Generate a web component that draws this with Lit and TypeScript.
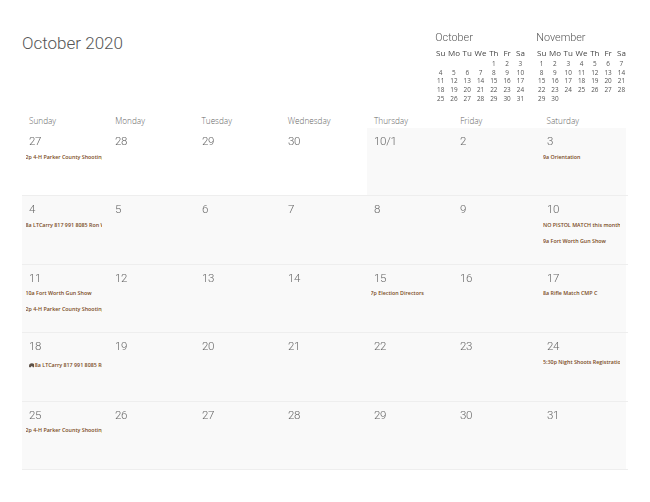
import { LitElement, html, css } from "lit";
import { customElement } from "lit/decorators.js";

type Ev = { t: string; icon?: boolean };
const DOW = ["Sunday", "Monday", "Tuesday", "Wednesday", "Thursday", "Friday", "Saturday"];
const MINI = ["Su", "Mo", "Tu", "We", "Th", "Fr", "Sa"];
const cells: { d: string; white?: boolean; ev?: Ev[] }[] = [
  { d: "27", white: true, ev: [{ t: "2p 4-H Parker County Shooting Sports" }] },
  { d: "28", white: true },
  { d: "29", white: true },
  { d: "30", white: true },
  { d: "10/1" },
  { d: "2" },
  { d: "3", ev: [{ t: "9a Orientation" }] },
  { d: "4", ev: [{ t: "8a LTCarry 817 991 8085 Ron Wilson" }] },
  { d: "5" }, { d: "6" }, { d: "7" }, { d: "8" }, { d: "9" },
  { d: "10", ev: [{ t: "NO PISTOL MATCH this month" }, { t: "9a Fort Worth Gun Show" }] },
  { d: "11", ev: [{ t: "10a Fort Worth Gun Show" }, { t: "2p 4-H Parker County Shooting Sports" }] },
  { d: "12" }, { d: "13" }, { d: "14" },
  { d: "15", ev: [{ t: "7p Election Directors" }] },
  { d: "16" },
  { d: "17", ev: [{ t: "8a Rifle Match CMP  C" }] },
  { d: "18", ev: [{ t: "8a LTCarry 817 991 8085 Ron Wilson", icon: true }] },
  { d: "19" }, { d: "20" }, { d: "21" }, { d: "22" }, { d: "23" },
  { d: "24", ev: [{ t: "5:30p Night Shoots Registration" }] },
  { d: "25", ev: [{ t: "2p 4-H Parker County Shooting Sports" }] },
  { d: "26" }, { d: "27" }, { d: "28" }, { d: "29" }, { d: "30" }, { d: "31" },
];

function monthDays(lead: number, count: number) {
  const out: string[] = [];
  for (let i = 0; i < lead; i++) out.push("");
  for (let i = 1; i <= count; i++) out.push(String(i));
  return out;
}

@customElement("app-root")
export class AppRoot extends LitElement {
  static styles = css`
    :host {
      display: block;
      width: 650px;
      height: 502px;
      box-sizing: border-box;
      padding: 20px 22px 0 22px;
      background: #fff;
      overflow: hidden;
      font-family: "Open Sans", "Noto Sans", sans-serif;
      color: #444;
    }
    .top { display: flex; justify-content: space-between; height: 94px; }
    h1 {
      margin: 0;
      padding-top: 11px;
      font-family: Roboto, "Open Sans", sans-serif;
      font-size: 17px;
      line-height: 25px;
      font-weight: 300;
      color: #555;
      height: max-content;
    }
    .minis { display: flex; gap: 8.7px; padding-top: 11px; margin-right: -0.4px; }
    .mini { width: 93px; }
    .mini-title {
      font-family: Roboto, "Open Sans", sans-serif;
      font-size: 10.8px;
      line-height: 14px;
      font-weight: 300;
      color: #555;
      padding-left: 1.3px;
      will-change: transform;
    }
    .mini-grid { display: grid; grid-template-columns: repeat(7, 13.3px); justify-content: start; will-change: transform; }
    .mini-h { font-size: 8px; line-height: 15px; text-align: center; color: #444; }
    .mini-d { font-size: 6.4px; line-height: 8.7px; text-align: center; color: #555; }
    .heads { display: grid; grid-template-columns: repeat(7, 86.25px); height: 14px; }
    .head { padding-left: 7px; font-size: 8.2px; line-height: 14px; font-weight: 300; color: #666; }
    .row {
      display: grid;
      grid-template-columns: repeat(7, 86.25px);
      height: 68.4px;
      box-sizing: border-box;
      border-bottom: 1px solid #eee;
    }
    .cell {
      background: #f9f9f9;
      overflow: hidden;
    }
    .cell.white { background: #fff; }
    .day {
      padding: 5px 0 0 7px;
      font-family: Roboto, "Open Sans", sans-serif;
      font-size: 11.5px;
      line-height: 16px;
      font-weight: 300;
      letter-spacing: -0.3px;
      color: #666;
      will-change: transform;
    }
    .events { padding: 3.5px 0 0 3.5px; width: 76.7px; overflow: hidden; }
    .ev {
      font-size: 5.35px;
      line-height: 8px;
      font-weight: 600;
      color: #7a4a22;
      white-space: nowrap;
      overflow: hidden;
      margin-bottom: 8px;
    }
    .ev.icon { margin-top: 3.5px; }
    .ev svg { width: 5.6px; height: 4.6px; vertical-align: -0.4px; margin: 0 0.6px 0 3px; }
  `;

  private mini(name: string, lead: number, count: number) {
    return html`<div class="mini">
      <div class="mini-title">${name}</div>
      <div class="mini-grid">
        ${MINI.map((m) => html`<div class="mini-h">${m}</div>`)}
        ${monthDays(lead, count).map((d) => html`<div class="mini-d">${d}</div>`)}
      </div>
    </div>`;
  }

  render() {
    const rows = [0, 7, 14, 21, 28].map((i) => cells.slice(i, i + 7));
    return html`
      <div class="top">
        <h1>October 2020</h1>
        <div class="minis">
          ${this.mini("October", 4, 31)}
          ${this.mini("November", 0, 30)}
        </div>
      </div>
      <div class="heads">${DOW.map((d) => html`<div class="head">${d}</div>`)}</div>
      ${rows.map(
        (r) => html`<div class="row">
          ${r.map(
            (c) => html`<div class="cell ${c.white ? "white" : ""}">
              <div class="day">${c.d}</div>
              <div class="events">
                ${(c.ev ?? []).map(
                  (e) => html`<div class="ev ${e.icon ? "icon" : ""}">${e.icon
                    ? html`<svg viewBox="0 0 12 10"><path d="M0 6a6 5.500 0 0 1 12 0v2a1 1 0 0 1-1 1H8.500a1 1 0 0 1-1-1V7h-3v1a1 1 0 0 1-1 1H1a1 1 0 0 1-1-1z" fill="#5d5148"/></svg>`
                    : ""}${e.t}</div>`
                )}
              </div>
            </div>`
          )}
        </div>`
      )}
    `;
  }
}
